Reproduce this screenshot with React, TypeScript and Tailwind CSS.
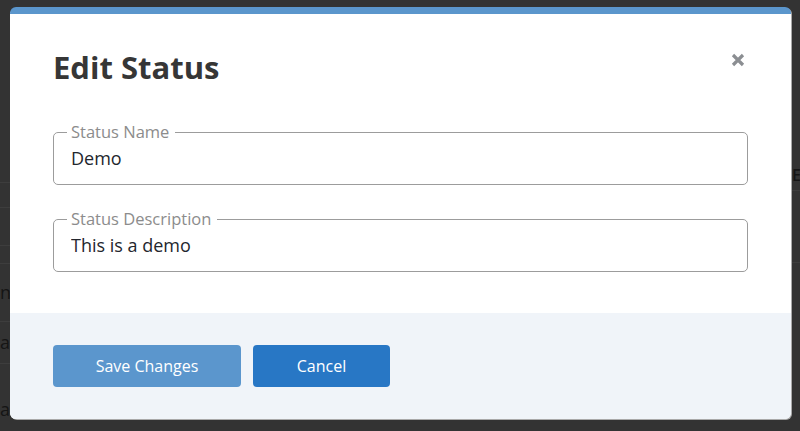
import { useState } from 'react';

const bgRows = [
  { h: 'h-[26px]', text: '' },
  { h: 'h-[25px]', text: '' },
  { h: 'h-[38px]', text: '' },
  { h: 'h-[18px]', text: '' },
  { h: 'h-[58px]', text: 'n' },
  { h: 'h-[42px]', text: 'a' },
  { h: 'h-[92px]', text: 'a' },
];

export default function App() {
  const [name, setName] = useState('Demo');
  const [description, setDescription] = useState('This is a demo');

  return (
    <div className="relative h-[431px] w-[800px] overflow-hidden bg-[#333333] font-['Open_Sans',sans-serif]">
      {/* dimmed page behind the modal */}
      <div className="flex pt-[157px]">
        <div className="w-[40px]">
          {bgRows.map((row, i) => (
            <div
              key={i}
              className={`${row.h} flex items-center border-b border-[#3d3d3d] text-[18px] text-[#151515]`}
            >
              {row.text}
            </div>
          ))}
        </div>
        <div className="flex-1" />
        <div className="w-[40px] pt-[6px]">
          <div className="h-[28px] border-b border-[#3d3d3d] pl-[32px] text-[16px] font-semibold text-[#151515]">E</div>
          <div className="h-[72px] border-b border-[#3d3d3d]" />
        </div>
      </div>

      {/* modal */}
      <div className="absolute left-[10px] top-[7px] w-[781px] overflow-hidden rounded-[6px] border-t-[7px] border-[#5b96cc] bg-white shadow-[1px_1px_0_#a9a9a9]">
        <div className="px-[43px] pt-[33px] pb-[41px]">
          <div className="flex items-start justify-between">
            <h2 className="text-[31px] leading-[40px] font-bold text-[#363636]">Edit Status</h2>
            <button type="button" className="mt-[5px] mr-[2px] p-[1px]" aria-label="Close">
              <svg width="14" height="14" viewBox="0 0 14 14">
                <path d="M2 2 L12 12 M12 2 L2 12" stroke="#8b8e92" strokeWidth="3.2" strokeLinecap="butt" />
              </svg>
            </button>
          </div>

          <fieldset className="mt-[35px] rounded-[5px] border border-[#9c9c9c] pl-[13px] pr-[14px] pb-[14px]">
            <legend className="pl-[4px] pr-[6px] text-[16.5px] leading-[20px] text-[#8c8c8c]">Status Name</legend>
            <input
              value={name}
              onChange={(e) => setName(e.target.value)}
              className="mt-[4px] block w-full pl-[4px] text-[18px] leading-[24px] text-[#23262d] outline-none"
            />
          </fieldset>

          <fieldset className="mt-[24px] rounded-[5px] border border-[#9c9c9c] pl-[13px] pr-[14px] pb-[14px]">
            <legend className="pl-[4px] pr-[6px] text-[16.5px] leading-[20px] text-[#8c8c8c]">Status Description</legend>
            <input
              value={description}
              onChange={(e) => setDescription(e.target.value)}
              className="mt-[4px] block w-full pl-[4px] text-[18px] leading-[24px] text-[#23262d] outline-none"
            />
          </fieldset>
        </div>

        <div className="flex gap-[12px] bg-[#f0f4f9] px-[43px] py-[32px]">
          <button
            type="button"
            className="h-[42px] w-[188px] rounded-[4px] bg-[#5b96cd] text-[16px] text-white"
          >
            Save Changes
          </button>
          <button
            type="button"
            className="h-[42px] w-[137px] rounded-[4px] bg-[#2877c5] text-[16px] text-white"
          >
            Cancel
          </button>
        </div>
      </div>
    </div>
  );
}
